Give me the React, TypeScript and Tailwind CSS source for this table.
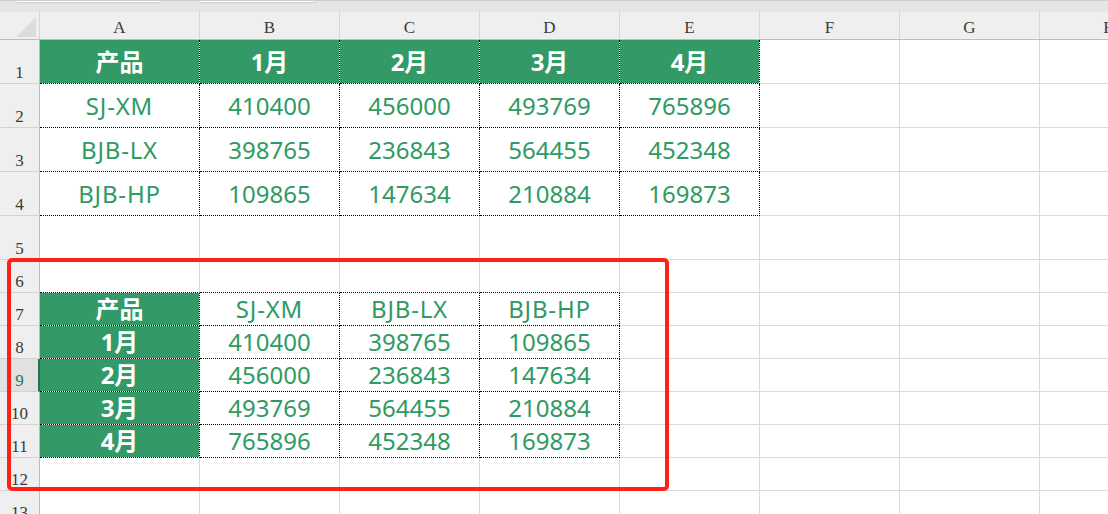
import React from "react";

const COLS = [
  { key: "A", w: "w-[160px]" },
  { key: "B", w: "w-[140px]" },
  { key: "C", w: "w-[140px]" },
  { key: "D", w: "w-[140px]" },
  { key: "E", w: "w-[140px]" },
  { key: "F", w: "w-[140px]" },
  { key: "G", w: "w-[140px]" },
  { key: "H", w: "w-[140px]" },
];

const ROWS = [
  { n: 1, h: "h-[44px]" },
  { n: 2, h: "h-[44px]" },
  { n: 3, h: "h-[44px]" },
  { n: 4, h: "h-[44px]" },
  { n: 5, h: "h-[44px]" },
  { n: 6, h: "h-[33px]" },
  { n: 7, h: "h-[33px]" },
  { n: 8, h: "h-[33px]" },
  { n: 9, h: "h-[33px]" },
  { n: 10, h: "h-[33px]" },
  { n: 11, h: "h-[33px]" },
  { n: 12, h: "h-[33px]" },
  { n: 13, h: "h-[33px]" },
];

// cell values, keyed by row number
const DATA: Record<number, string[]> = {
  1: ["产品", "1月", "2月", "3月", "4月"],
  2: ["SJ-XM", "410400", "456000", "493769", "765896"],
  3: ["BJB-LX", "398765", "236843", "564455", "452348"],
  4: ["BJB-HP", "109865", "147634", "210884", "169873"],
  7: ["产品", "SJ-XM", "BJB-LX", "BJB-HP"],
  8: ["1月", "410400", "398765", "109865"],
  9: ["2月", "456000", "236843", "147634"],
  10: ["3月", "493769", "564455", "210884"],
  11: ["4月", "765896", "452348", "169873"],
};

const inTable = (r: number, c: number) =>
  (r >= 1 && r <= 4 && c >= 0 && c <= 4) || (r >= 7 && r <= 11 && c >= 0 && c <= 3);

const isHead = (r: number, c: number) => (r === 1 && c <= 4) || (r >= 7 && r <= 11 && c === 0);

function Cell({ r, c }: { r: number; c: number }) {
  const right = inTable(r, c) || inTable(r, c + 1);
  const bottom = inTable(r, c) || inTable(r + 1, c);
  const head = isHead(r, c);
  const text = DATA[r]?.[c] ?? "";
  const latin = /[A-Z]/.test(text);
  return (
    <div
      className={`${COLS[c].w} shrink-0 flex items-center justify-center border-r border-b ${
        right ? "border-r-black [border-right-style:dotted]" : "border-r-[#dadada]"
      } ${bottom ? "border-b-black [border-bottom-style:dotted]" : "border-b-[#dadada]"} ${
        head ? "bg-[#339966] bg-clip-padding text-white font-bold" : "text-[#2f9a62]"
      } ${latin ? "tracking-[0.8px]" : ""} text-[24px] leading-none font-['Noto_Sans','Noto_Sans_CJK_SC',sans-serif]`}
    >
      {text}
    </div>
  );
}

export default function App() {
  return (
    <div className="relative w-[1108px] h-[514px] overflow-hidden bg-white">
      {/* top strip */}
      <div className="h-[12px] bg-[#e4e5e7] border-t border-[#cdcdcd] flex">
        <div className="ml-[15px] w-[147px] h-[2px] bg-white border-b border-x border-[#d0d0d0] rounded-b-[2px]" />
        <div className="ml-[36px] w-[118px] h-[2px] bg-white border-b border-x border-[#d0d0d0] rounded-b-[2px]" />
      </div>

      {/* column headers */}
      <div className="flex h-[28px] bg-[#efefef] border-b border-[#bdbdbd]">
        <div className="w-[40px] shrink-0 relative border-r border-[#d6d6d6]">
          <svg className="absolute left-[16px] top-[5px]" width="20" height="20" viewBox="0 0 20 20">
            <polygon points="20,0 20,20 0,20" fill="#dcdcdc" />
          </svg>
        </div>
        {COLS.map((col) => (
          <div
            key={col.key}
            className={`${col.w} shrink-0 flex items-center justify-center pt-[5px] border-r border-[#d6d6d6] text-[17px] text-[#3a3a3a] font-['Liberation_Serif',serif]`}
          >
            {col.key}
          </div>
        ))}
      </div>

      {/* rows */}
      {ROWS.map((row) => {
        const sel = row.n === 9;
        return (
          <div key={row.n} className={`flex ${row.h}`}>
            <div
              className={`w-[40px] shrink-0 flex items-end justify-center pb-[2px] border-b border-[#d2d2d2] text-[17px] leading-none font-['Liberation_Serif',serif] ${
                sel
                  ? "bg-[#e1e1e1] text-[#217a5a] border-r-2 border-r-[#21744a] pl-[1px]"
                  : "bg-[#efefef] text-[#3a3a3a] border-r border-r-[#bdbdbd]"
              }`}
            >
              {row.n}
            </div>
            {COLS.map((col, c) => (
              <Cell key={col.key} r={row.n} c={c} />
            ))}
          </div>
        );
      })}

      {/* red annotation box */}
      <div className="absolute left-[7px] top-[258px] w-[662px] h-[233px] border-4 border-[#ff2016] rounded-[5px] pointer-events-none" />
    </div>
  );
}
